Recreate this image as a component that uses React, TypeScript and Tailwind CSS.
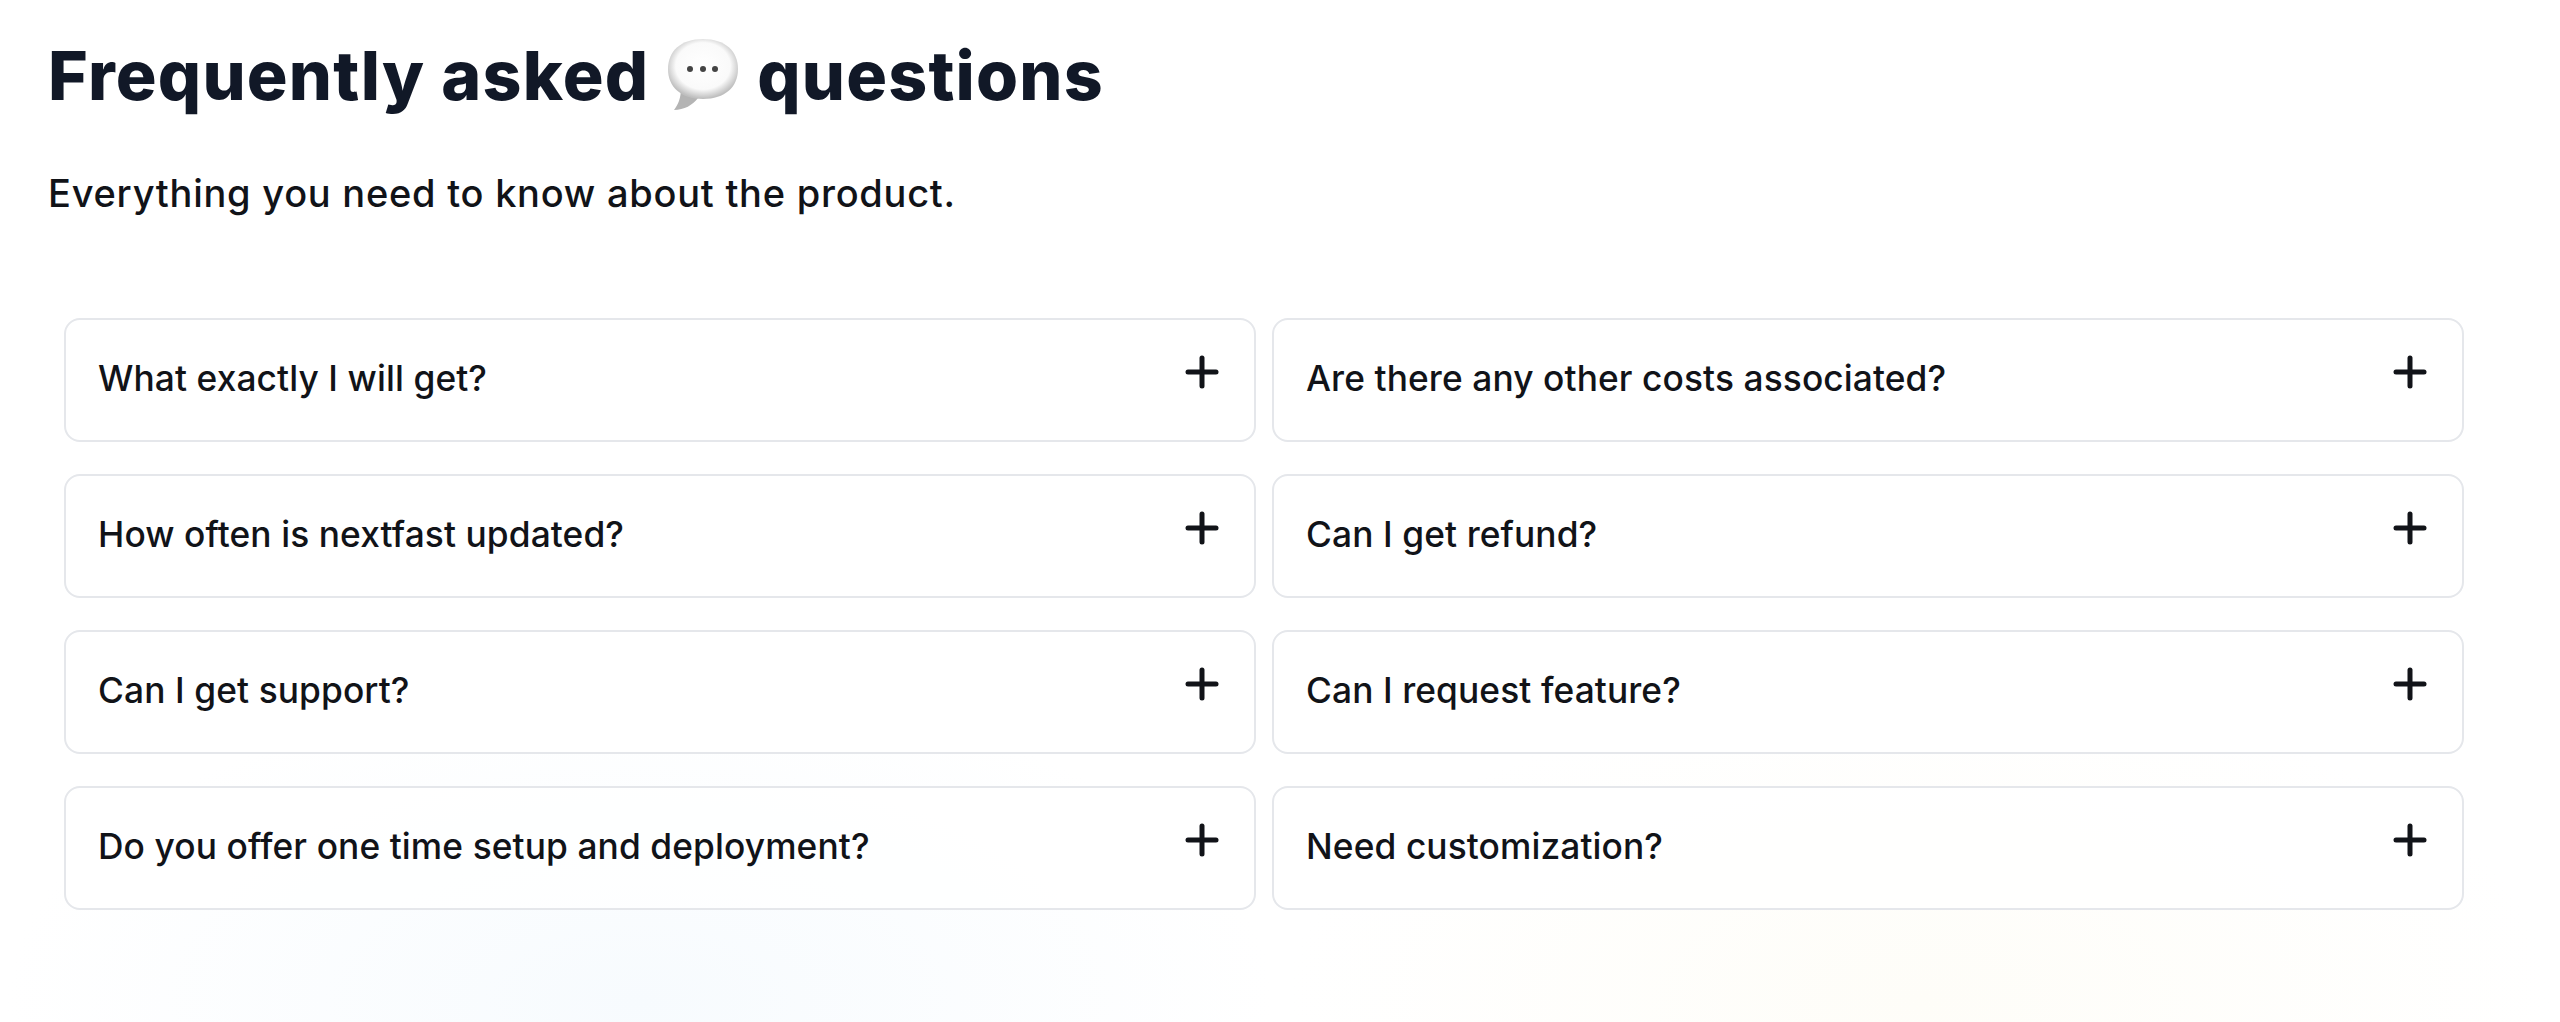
import { Plus } from "lucide-react"

const questions = [
  "What exactly I will get?",
  "Are there any other costs associated?",
  "How often is nextfast updated?",
  "Can I get refund?",
  "Can I get support?",
  "Can I request feature?",
  "Do you offer one time setup and deployment?",
  "Need customization?",
]

const BubbleEmoji = () => (
  <svg viewBox="0 0 72 74" className="inline-block w-[72px] h-[74px] shrink-0">
    <defs>
      <radialGradient id="bubble" cx="50%" cy="45%" r="54%">
        <stop offset="0%" stopColor="#ffffff" />
        <stop offset="72%" stopColor="#fafafa" />
        <stop offset="100%" stopColor="#bfbfbf" />
      </radialGradient>
    </defs>
    <path d="M14 50 C14 60 11 67 7 72 C17 72 26 67 31 60 Z" fill="#b4b4b4" />
    <path d="M36 1 C58 1 71 13 71 31 C71 49 58 61 36 61 C14 61 1 49 1 31 C1 13 14 1 36 1 Z" fill="url(#bubble)" />
    <circle cx="23" cy="31" r="3" fill="#444444" />
    <circle cx="36" cy="31" r="3" fill="#444444" />
    <circle cx="48" cy="31" r="3" fill="#444444" />
  </svg>
)

const App = () => {
  return (
    <div className="relative w-full h-[1022px] overflow-hidden bg-white font-['Inter',sans-serif]">
      <div className="absolute left-0 right-[1280px] bottom-[-300px] h-[640px] bg-[radial-gradient(ellipse_at_center,#f7fbfe,#ffffff_70%)]"></div>
      <div className="absolute left-[1280px] right-0 bottom-[-300px] h-[640px] bg-[radial-gradient(ellipse_at_center,#fefdf8,#ffffff_70%)]"></div>
      <div className="relative">
        <div className="px-12 pt-[30px]">
          <h1 className="flex items-center gap-[18px] text-[68px] leading-[90px] font-extrabold tracking-[1.2px] text-[#111827]">
            Frequently asked <BubbleEmoji /> questions
          </h1>
          <p className="mt-[48px] text-[38px] leading-[50px] font-medium tracking-[0.75px] text-[#111318]">Everything you need to know about the product.</p>
        </div>
        <div className="mt-[100px] pl-16 pr-24 grid grid-cols-2 gap-x-4 gap-y-8">
          {questions.map((q) => (
            <div key={q} className="h-[124px] pl-8 pr-[28px] flex justify-between border-2 border-[#e5e7eb] rounded-2xl bg-white/70">
              <span className="mt-[37px] text-[35.3px] leading-[44px] font-medium tracking-[0.1px] text-[#111318]">{q}</span>
              <Plus size={48} strokeWidth={2.5} className="mt-[28px] text-[#111318]" />
            </div>
          ))}
        </div>
      </div>
    </div>
  )
}

export default App
